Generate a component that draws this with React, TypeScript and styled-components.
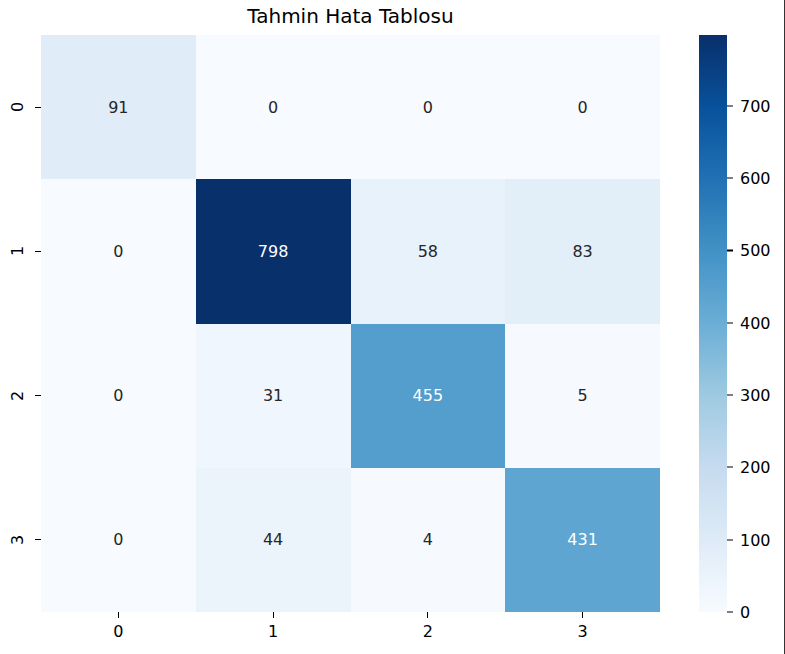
import React from "react";
import styled, { createGlobalStyle } from "styled-components";

const GlobalStyle = createGlobalStyle`
  html, body { margin: 0; padding: 0; background: #ffffff; }
  body { font-family: "DejaVu Sans", "Liberation Sans", sans-serif; }
`;

const DATA = [
  [91, 0, 0, 0],
  [0, 798, 58, 83],
  [0, 31, 455, 5],
  [0, 44, 4, 431],
];
const VMAX = 798;
const TICKS = [0, 100, 200, 300, 400, 500, 600, 700];

const BLUES: [number, number, number][] = [
  [247, 251, 255],
  [222, 235, 247],
  [198, 219, 239],
  [158, 202, 225],
  [107, 174, 214],
  [66, 146, 198],
  [33, 113, 181],
  [8, 81, 156],
  [8, 48, 107],
];

function blues(t: number): [number, number, number] {
  const x = Math.max(0, Math.min(1, t)) * 8;
  const i = Math.min(7, Math.floor(x));
  const f = x - i;
  const a = BLUES[i];
  const b = BLUES[i + 1];
  return [0, 1, 2].map((k) => Math.round(a[k] + (b[k] - a[k]) * f)) as [number, number, number];
}

function luminance([r, g, b]: [number, number, number]) {
  const lin = (c: number) => {
    const v = c / 255;
    return v <= 0.03928 ? v / 12.92 : Math.pow((v + 0.055) / 1.055, 2.4);
  };
  return 0.2126 * lin(r) + 0.7152 * lin(g) + 0.0722 * lin(b);
}

const gradient = `linear-gradient(to top, ${BLUES.map(
  (c, i) => `rgb(${c[0]},${c[1]},${c[2]}) ${(i * 100) / 8}%`
).join(", ")})`;

const Figure = styled.div`
  width: 784px;
  height: 654px;
  border-right: 1px solid #333333;
  display: grid;
  grid-template-columns: 41px 619px 39px 28px 1fr;
  grid-template-rows: 35px 577px 1fr;
  background: #ffffff;
  color: #000000;
`;

const Title = styled.div`
  grid-column: 2;
  grid-row: 1;
  display: flex;
  justify-content: center;
  align-items: flex-start;
  padding-top: 4px;
  font-size: 20px;
  line-height: 24px;
`;

const YAxis = styled.div`
  grid-column: 1;
  grid-row: 2;
  display: grid;
  grid-template-rows: repeat(4, 1fr);
`;

const YTick = styled.div`
  display: flex;
  align-items: center;
  justify-content: flex-end;
`;

const YLabel = styled.span`
  display: block;
  width: 16px;
  font-size: 16px;
  line-height: 16px;
  text-align: center;
  transform: rotate(-90deg);
  margin-right: 9px;
`;

const YMark = styled.span`
  width: 6px;
  height: 1.2px;
  background: #000000;
`;

const Heatmap = styled.div`
  grid-column: 2;
  grid-row: 2;
  display: grid;
  grid-template-columns: repeat(4, 1fr);
  grid-template-rows: repeat(4, 1fr);
`;

const Cell = styled.div<{ $bg: string; $fg: string }>`
  background: ${(p) => p.$bg};
  color: ${(p) => p.$fg};
  display: flex;
  align-items: center;
  justify-content: center;
  font-size: 16px;
`;

const XAxis = styled.div`
  grid-column: 2;
  grid-row: 3;
  display: grid;
  grid-template-columns: repeat(4, 1fr);
  align-items: start;
`;

const XTick = styled.div`
  display: flex;
  flex-direction: column;
  align-items: center;
`;

const XMark = styled.span`
  width: 1.2px;
  height: 6px;
  background: #000000;
`;

const XLabel = styled.span`
  font-size: 16px;
  line-height: 19px;
  margin-top: 4px;
`;

const ColorBar = styled.div`
  grid-column: 4;
  grid-row: 2;
  background: ${gradient};
`;

const CbAxis = styled.div`
  grid-column: 5;
  grid-row: 2;
  position: relative;
`;

const CbTick = styled.div`
  position: absolute;
  left: 0;
  display: flex;
  align-items: center;
  transform: translateY(-50%);
`;

const CbMark = styled.span`
  width: 6px;
  height: 1.2px;
  background: #000000;
`;

const CbLabel = styled.span`
  font-size: 16px;
  line-height: 19px;
  margin-left: 7px;
`;

export default function App() {
  const H = 577;
  return (
    <>
      <GlobalStyle />
      <Figure>
        <Title>Tahmin Hata Tablosu</Title>
        <YAxis>
          {DATA.map((_, i) => (
            <YTick key={i}>
              <YLabel>{i}</YLabel>
              <YMark />
            </YTick>
          ))}
        </YAxis>
        <Heatmap>
          {DATA.flatMap((row, i) =>
            row.map((v, j) => {
              const c = blues(v / VMAX);
              const fg = luminance(c) > 0.408 ? "#262626" : "#ffffff";
              return (
                <Cell key={`${i}-${j}`} $bg={`rgb(${c[0]},${c[1]},${c[2]})`} $fg={fg}>
                  {v}
                </Cell>
              );
            })
          )}
        </Heatmap>
        <XAxis>
          {DATA.map((_, j) => (
            <XTick key={j}>
              <XMark />
              <XLabel>{j}</XLabel>
            </XTick>
          ))}
        </XAxis>
        <ColorBar />
        <CbAxis>
          {TICKS.map((t) => (
            <CbTick key={t} style={{ top: `${H - (t / VMAX) * H}px` }}>
              <CbMark />
              <CbLabel>{t}</CbLabel>
            </CbTick>
          ))}
        </CbAxis>
      </Figure>
    </>
  );
}
